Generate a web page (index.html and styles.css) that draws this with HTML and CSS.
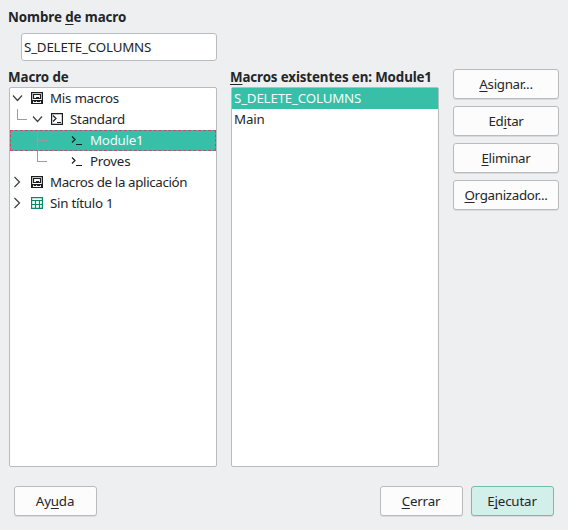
FILE: index.html
```html
<!DOCTYPE html>
<html lang="es">
<head>
<meta charset="utf-8">
<title>Macros</title>
<link rel="stylesheet" href="styles.css">
</head>
<body>
<svg class="defs" width="0" height="0">
  <symbol id="open" viewBox="0 0 12 12"><path d="M1 3.500 5.500 8.500 10 3.500" fill="none" stroke="#3b3f42" stroke-width="1.2"/></symbol>
  <symbol id="closed" viewBox="0 0 12 12"><path d="M2.500 1 7.500 6l-5 5" fill="none" stroke="#3b3f42" stroke-width="1.2"/></symbol>
  <symbol id="app" viewBox="0 0 12 12"><path d="M.6.6h10.800v8H.6zM2.500 2.500h7v4h-7z" fill="none" stroke="#1b1e20" stroke-width="1.2"/><path d="M5 5h3v2H5zM0 9h2v2h8V9h2v3H0zM3 9h2v1H3zM6 9h3v1H6z" fill="#1b1e20"/></symbol>
  <symbol id="library" viewBox="0 0 12 12"><path d="M.6.6h10.800v10.800H.6zM2 2.500 5 5.500 2 8.500M6 9.500h4" fill="none" stroke="#1b1e20" stroke-width="1.2"/></symbol>
  <symbol id="module" viewBox="0 0 12 12"><path d="M1 2.500 4 5.500 1 8.500M5 10.500h6" fill="none" stroke="#1b1e20" stroke-width="1.2"/></symbol>
  <symbol id="sheet" viewBox="0 0 12 12"><path d="M.6.6h10.800v10.800H.6zM0 3.500h12M0 7.500h12M4.500 3v9M8.500 3v9" fill="none" stroke="#0f8664" stroke-width="1.2"/></symbol>
</svg>
<main class="dialog">
  <section class="name">
    <h2 class="label">Nombre <u>d</u>e macro</h2>
    <div class="field">S_DELETE_COLUMNS</div>
  </section>
  <div class="columns">
    <section class="panel">
      <h2 class="label">Macro de</h2>
      <div class="list">
        <div class="row"><svg class="chevron"><use href="#open"/></svg><svg class="icon"><use href="#app"/></svg>Mis macros</div>
        <div class="row level1"><i class="branch last"></i><svg class="chevron"><use href="#open"/></svg><svg class="icon"><use href="#library"/></svg>Standard</div>
        <div class="row level2 selected focus"><i class="branch"></i><svg class="icon"><use href="#module"/></svg>Module1</div>
        <div class="row level2"><i class="branch last"></i><svg class="icon"><use href="#module"/></svg>Proves</div>
        <div class="row tight"><svg class="chevron"><use href="#closed"/></svg><svg class="icon"><use href="#app"/></svg>Macros de la aplicación</div>
        <div class="row"><svg class="chevron"><use href="#closed"/></svg><svg class="icon"><use href="#sheet"/></svg>Sin título 1</div>
      </div>
    </section>
    <section class="panel">
      <h2 class="label wide"><u>M</u>acros existentes en: Module1</h2>
      <div class="list plain">
        <div class="row selected">S_DELETE_COLUMNS</div>
        <div class="row">Main</div>
      </div>
    </section>
    <div class="actions">
      <button class="button"><u>A</u>signar...</button>
      <button class="button">Ed<u>i</u>tar</button>
      <button class="button"><u>E</u>liminar</button>
      <button class="button"><u>O</u>rganizador...</button>
    </div>
  </div>
  <footer class="footer">
    <button class="button help">Ay<u>u</u>da</button>
    <button class="button"><u>C</u>errar</button>
    <button class="button primary">E<u>j</u>ecutar</button>
  </footer>
</main>
</body>
</html>
```
FILE: styles.css
```css
* { box-sizing: border-box; }
body {
  margin: 0;
  background: #eeeff1;
  color: #232629;
  font: 13.333px/20px "Noto Sans", sans-serif;
}
.defs { display: block; }
.dialog { height: 530px; padding: 7px 9px 0; }
u {
  text-decoration: underline;
  text-decoration-thickness: 1px;
  text-decoration-skip-ink: none;
  text-underline-offset: 2px;
}
.label { height: 20px; margin: 0 0 0 -1px; font-size: inherit; font-weight: 700; letter-spacing: -0.08px; white-space: nowrap; }
.wide { letter-spacing: -0.12px; }
.field {
  width: 196px;
  height: 28px;
  margin: 6px 0 0 12px;
  padding: 3px 2px;
  border: 1px solid #b9bcbe;
  border-radius: 3px;
  background: #fff;
  letter-spacing: -0.19px;
}
.columns { display: flex; gap: 14px; margin-top: 6px; }
.panel { width: 208px; }
.list {
  height: 380px;
  border: 1px solid #b9bcbe;
  border-radius: 2px;
  background: #fff;
}
.row { display: flex; align-items: flex-start; height: 21px; padding-left: 2px; letter-spacing: -0.25px; white-space: nowrap; }
.tight { letter-spacing: -0.35px; }
.plain .row { letter-spacing: -0.19px; }
.selected { background: #37bfa7; color: #f4fcfa; }
.focus { outline: 1px dashed #c34b62; outline-offset: -1px; }
.chevron, .icon { flex: none; width: 12px; height: 12px; margin: 4px 7px 0 0; }
.level1 { padding-left: 7px; }
.level1 .branch { margin-right: 5px; }
.level2 { padding-left: 27px; }
.level2 .branch { margin-right: 24px; }
.branch {
  flex: none;
  align-self: stretch;
  width: 10px;
  background:
    linear-gradient(#9a9c9d, #9a9c9d) 0 0 / 1px 100% no-repeat,
    linear-gradient(#9a9c9d, #9a9c9d) 0 10px / 10px 1px no-repeat;
}
.branch.last { height: 11px; align-self: flex-start; }
.actions { display: flex; flex-direction: column; gap: 7px; padding-top: 2px; }
.button {
  width: 106px;
  height: 30px;
  padding: 0 0 1px;
  border: 1px solid #b9bcbe;
  border-radius: 3px;
  background: #fcfcfc;
  box-shadow: 0 1px 0 #d9dbdc;
  color: inherit;
  font: inherit;
  letter-spacing: -0.3px;
}
.footer { display: flex; gap: 8px; margin: 19px 5px 0; }
.footer .button { width: 83px; padding-right: 1px; letter-spacing: -0.17px; }
.footer .help { margin-right: auto; }
.footer .primary { border-color: #72bdae; background: #d3efe9; }
```
